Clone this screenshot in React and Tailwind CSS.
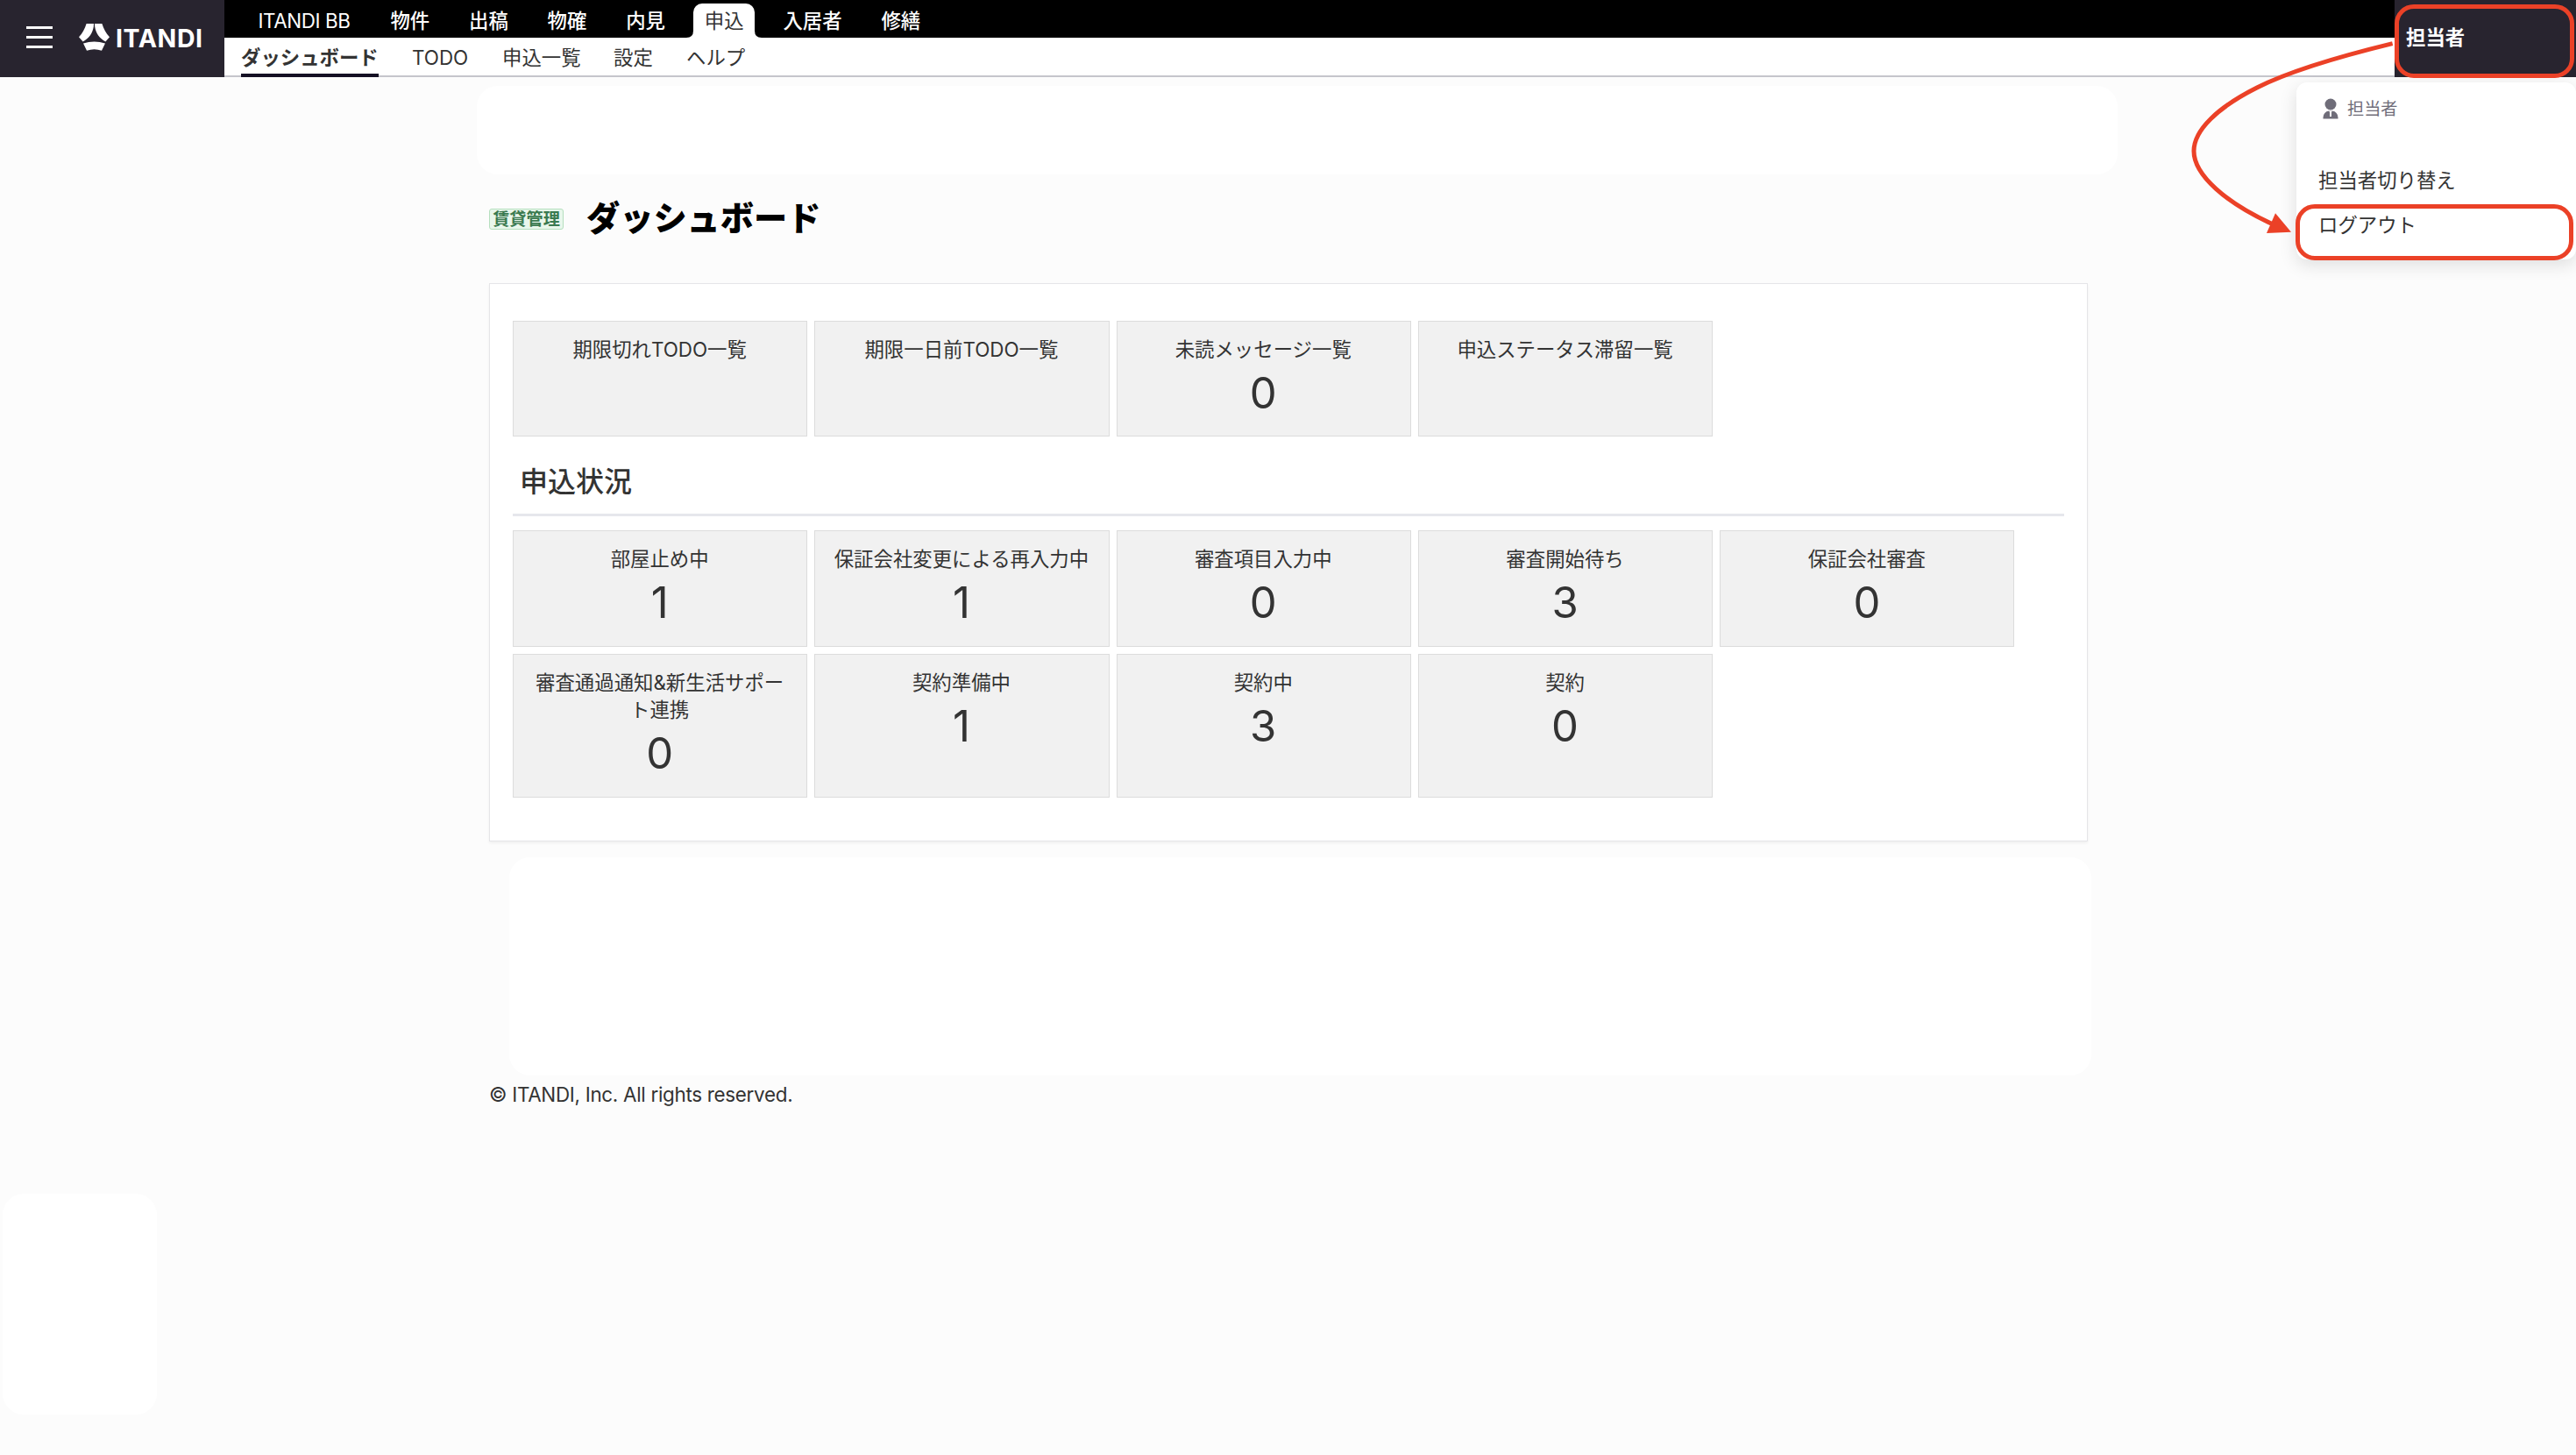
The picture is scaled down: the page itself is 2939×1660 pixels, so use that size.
const topNav = [
  { label: 'ITANDI BB', w: 'w-[152px]', text: 'font-normal tracking-[-0.4px]' },
  { label: '物件', w: 'w-[89.6px]' },
  { label: '出稿', w: 'w-[89.6px]' },
  { label: '物確', w: 'w-[89.6px]' },
  { label: '内見', w: 'w-[89.6px]' },
  { label: '申込', w: 'w-[89.6px]', active: true },
  { label: '入居者', w: 'w-[112px]' },
  { label: '修繕', w: 'w-[89.6px]' },
]

const subNav = [
  { label: 'ダッシュボード', w: 'w-[157px]', active: true },
  { label: 'TODO', w: 'w-[65px]' },
  { label: '申込一覧', w: 'w-[89px]' },
  { label: '設定', w: 'w-[45px]' },
  { label: 'ヘルプ', w: 'w-[68px]' },
]

const alerts = [
  { label: '期限切れTODO一覧' },
  { label: '期限一日前TODO一覧' },
  { label: '未読メッセージ一覧', count: 0 },
  { label: '申込ステータス滞留一覧' },
]

const statuses = [
  { label: '部屋止め中', count: 1 },
  { label: '保証会社変更による再入力中', count: 1 },
  { label: '審査項目入力中', count: 0 },
  { label: '審査開始待ち', count: 3 },
  { label: '保証会社審査', count: 0 },
]

const contracts = [
  { label: '審査通過通知&新生活サポート連携', count: 0 },
  { label: '契約準備中', count: 1 },
  { label: '契約中', count: 3 },
  { label: '契約', count: 0 },
]

function Tile({ label, count }) {
  return (
    <div className="border border-[#dcdcdc] bg-[#f1f1f1] px-[20px] pt-[16px] text-center">
      <div className="-ml-px break-all text-[22.4px] leading-[31px]">{label}</div>
      {count !== undefined && <div className="mt-px -ml-px text-[49px] leading-[68px]">{count}</div>}
    </div>
  )
}

function TileRow({ items, className }) {
  return (
    <div className={`grid w-[1713.5px] grid-cols-5 gap-x-[8px] ${className}`}>
      {items.map((t) => <Tile key={t.label} {...t} />)}
    </div>
  )
}

function Logo() {
  return (
    <div className="ml-[30px] flex items-center">
      <svg width="35" height="31" viewBox="0 0 35 31" fill="#fff">
        <path d="M8.6 0H17L16.8 3.6C15.6 11 11.4 17 4.6 20.6L0 15.2C4 11 6.8 6 8.6 0Z" />
        <path d="M18 0H26.4C28.2 6 31 11 35 15.2L30.4 20.6C23.6 17 19.4 11 18.2 3.6Z" />
        <path d="M5 22.4Q17.5 18.4 30 22.4L26 30.8Q17.5 27.6 9 30.8Z" />
      </svg>
      <span className="mt-[2px] ml-[7px] w-[100px] whitespace-nowrap text-[28.5px] leading-[32px] font-bold tracking-[0.6px] text-white">ITANDI</span>
    </div>
  )
}

function Header() {
  return (
    <header className="flex h-[88px]">
      <div className="flex w-[256px] items-center bg-[#28242f] pb-[3px]">
        <div className="ml-[30px] flex w-[30px] flex-col gap-[8px]">
          <i className="h-[3px] bg-white" />
          <i className="h-[3px] bg-white" />
          <i className="h-[3px] bg-white" />
        </div>
        <Logo />
      </div>
      <div className="flex flex-1 flex-col border-b-2 border-[#c5c5cc] bg-white">
        <nav className="flex h-[43px] bg-black pl-[15px] text-[22.4px] font-medium text-white">
          {topNav.map((n) => (
            <div key={n.label} className={`flex justify-center ${n.w} ${n.text || ''}`}>
              {n.active ? (
                <div className="relative mt-[4px] flex h-[39px] w-[70px] items-center justify-center rounded-t-[10px] bg-white font-normal text-[#333]">
                  {n.label}
                  <svg className="absolute bottom-0 -left-[8px]" width="8" height="8"><path d="M8 0V8H0Q8 8 8 0" fill="#fff" /></svg>
                  <svg className="absolute -right-[8px] bottom-0" width="8" height="8"><path d="M0 0V8H8Q0 8 0 0" fill="#fff" /></svg>
                </div>
              ) : (
                <div className="mt-[4px] flex h-[39px] items-center whitespace-nowrap">{n.label}</div>
              )}
            </div>
          ))}
        </nav>
        <nav className="flex h-[45px] gap-[38px] pl-[19px] text-[22.4px] leading-[45px] text-[#333]">
          {subNav.map((n) => (
            <div key={n.label} className={`whitespace-nowrap ${n.w} ${n.active ? 'border-b-4 border-[#141024] font-bold' : ''}`}>{n.label}</div>
          ))}
        </nav>
      </div>
      <div className="w-[207px] bg-[#28242f] pl-[13px] text-[22.4px] leading-[86px] font-bold text-white">担当者</div>
    </header>
  )
}

function UserMenu() {
  return (
    <div className="absolute top-[94px] right-0 h-[202px] w-[319px] rounded-[12px] bg-white pl-[25px] shadow-[0_6px_20px_rgba(0,0,0,0.12)]">
      <div className="flex items-center gap-[10px] pt-[17px] pl-[5px] text-[19.2px] leading-[26px] text-[#6f6d79]">
        <svg width="18" height="24" viewBox="0 0 18 24" fill="#6f6d79">
          <circle cx="9" cy="7" r="6.5" />
          <path d="M0.5 23.5V22Q1 15.5 7 14.5H11Q17 15.5 17.5 22V23.5Z" />
          <path d="M7 14.5H11L10 16V21H8V16Z" fill="#fff" />
        </svg>
        担当者
      </div>
      <div className="mt-[52px] text-[22.4px] leading-[33px]">担当者切り替え</div>
      <div className="mt-[18px] text-[22.4px] leading-[33px]">ログアウト</div>
    </div>
  )
}

function Annotations() {
  return (
    <>
      <div className="absolute top-[5px] right-[2px] h-[84px] w-[205px] rounded-[22px] border-5 border-[#eb4127]" />
      <div className="absolute top-[233px] right-[3px] h-[64px] w-[317px] rounded-[22px] border-5 border-[#eb4127]" />
      <svg className="absolute top-0 right-0" width="459" height="320" viewBox="0 0 1377 960">
        <path d="M749 149C560 195 400 242 285 300C150 368 69 445 69 517C69 600 180 695 340 768" fill="none" stroke="#eb4127" strokeWidth="15" />
        <path d="M348 730L402 794L318 798Z" fill="#eb4127" />
      </svg>
    </>
  )
}

export default function App() {
  return (
    <div className="relative h-[1660px] w-[2939px] overflow-hidden bg-[#fcfcfc] font-[Inter,'Noto_Sans_CJK_JP',sans-serif] text-[#333]">
      <Header />
      <main className="pl-[544px]">
        <div className="mt-[10px] h-[101px] w-[1872px] rounded-[24px] bg-white" />
        <div className="mt-[20px] ml-[14px] flex h-[60px] items-center">
          <span className="mt-[2px] h-[24px] w-[85px] rounded-[3px] border border-[#b5dfbe] bg-[#e9f7ec] text-center text-[19.2px] leading-[22px] font-bold text-[#3b7a50]">賃貸管理</span>
          <h1 className="ml-[26px] text-[38.2px] leading-[60px] font-black text-black">ダッシュボード</h1>
        </div>
        <section className="mt-[44px] ml-[14px] h-[637px] w-[1824px] border border-[#e5e5e8] bg-white pt-[42px] pl-[26px] shadow-[0_2px_3px_rgba(0,0,0,0.05)]">
          <TileRow items={alerts} className="h-[132px]" />
          <h2 className="mt-[20px] h-[71px] w-[1770px] border-b-3 border-[#e6e7ec] pl-[8px] text-[32px] leading-[63px] font-medium">申込状況</h2>
          <TileRow items={statuses} className="mt-[16px] h-[133px]" />
          <TileRow items={contracts} className="mt-[8px] h-[164px]" />
        </section>
        <div className="mt-[18px] ml-[37px] h-[249px] w-[1805px] rounded-[24px] bg-white" />
        <footer className="mt-[7px] ml-[14px] text-[22.4px] leading-[30px] tracking-[-0.29px]">© ITANDI, Inc. All rights reserved.</footer>
      </main>
      <div className="mt-[98px] ml-[3px] h-[252px] w-[176px] rounded-[24px] bg-white" />
      <UserMenu />
      <Annotations />
    </div>
  )
}
